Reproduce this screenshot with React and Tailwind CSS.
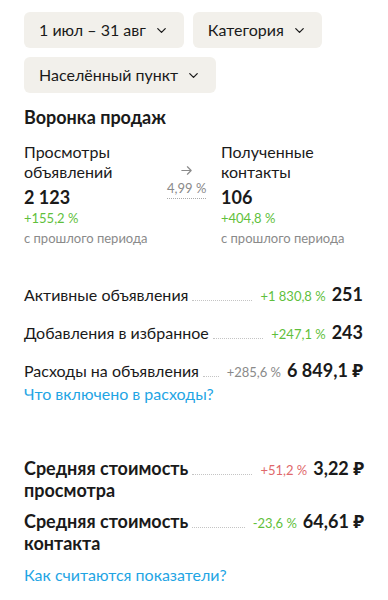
import { ChevronDown } from 'lucide-react';

function Chip({ label }) {
  return (
    <button
      type="button"
      className="flex h-9 items-center gap-2 rounded-md bg-[#f2f0eb] px-[15px] text-[16px] text-[#1a1a1a]"
    >
      <span>{label}</span>
      <ChevronDown size={15} strokeWidth={2} />
    </button>
  );
}

function Leader() {
  return <span className="mx-1 h-[1px] min-w-[12px] flex-1 self-baseline border-b border-dotted border-[#c4c4c4]" />;
}

function Row({ label, pct, pctColor, value }) {
  return (
    <div className="flex items-baseline leading-6">
      <span className="text-[16px] text-[#1a1a1a]">{label}</span>
      <Leader />
      <span className={`ml-1 text-[13px] ${pctColor}`}>{pct}</span>
      <span className="ml-[6px] text-[18px] font-bold text-[#1a1a1a]">{value}</span>
    </div>
  );
}

function CostRow({ first, second, pct, pctColor, value }) {
  return (
    <div className="flex items-baseline leading-[22px]">
      <div className="flex flex-1 flex-col">
        <div className="flex items-baseline">
          <span className="text-[18px] font-bold">{first}</span>
          <Leader />
        </div>
        <span className="text-[18px] font-bold">{second}</span>
      </div>
      <span className={`ml-1 text-[13px] ${pctColor}`}>{pct}</span>
      <span className="ml-[6px] text-[18px] font-bold">{value}</span>
    </div>
  );
}

function FunnelCol({ title, second, value, pct }) {
  return (
    <div className="flex flex-col">
      <span className="text-[16px] leading-5">{title}</span>
      <span className="text-[16px] leading-5">{second}</span>
      <span className="mt-[5px] text-[18px] font-bold leading-5">{value}</span>
      <span className="mt-[1px] text-[13px] leading-5 text-[#5fbf3c]">{pct}</span>
      <span className="whitespace-nowrap text-[13px] leading-5 text-[#8a8a8a]">с прошлого периода</span>
    </div>
  );
}

export default function App() {
  return (
    <div className="min-h-[600px] bg-white px-6 pt-3 text-[#1a1a1a]" style={{ fontFamily: 'Lato, "Noto Sans", sans-serif' }}>
      <div className="flex flex-wrap gap-[9px]">
        <Chip label="1 июл – 31 авг" />
        <Chip label="Категория" />
        <Chip label="Населённый пункт" />
      </div>

      <h2 className="mt-[12px] text-[18px] font-bold leading-6">Воронка продаж</h2>

      <div className="mt-[13px] flex">
        <div className="w-[143px] shrink-0">
          <FunnelCol title="Просмотры" second="объявлений" value="2 123" pct="+155,2 %" />
        </div>
        <div className="w-[54px] shrink-0 pt-[17px]">
          <div className="inline-flex flex-col items-center">
            <svg width="13" height="13" viewBox="0 0 14 14" fill="none" stroke="#8a8a8a" strokeWidth="1.3" strokeLinecap="round" strokeLinejoin="round">
              <path d="M2 7h10M8 3l4 4-4 4" />
            </svg>
            <span className="mt-[1px] border-b border-dotted border-[#aaa] text-[13px] leading-5 text-[#8a8a8a]">4,99 %</span>
          </div>
        </div>
        <div className="flex-1">
          <FunnelCol title="Полученные" second="контакты" value="106" pct="+404,8 %" />
        </div>
      </div>

      <div className="mt-[34px] flex flex-col gap-[12px] pr-[1px]">
        <Row label="Активные объявления" pct="+1 830,8 %" pctColor="text-[#5fbf3c]" value="251" />
        <Row label="Добавления в избранное" pct="+247,1 %" pctColor="text-[#5fbf3c]" value="243" />
        <div>
          <Row label="Расходы на объявления" pct="+285,6 %" pctColor="text-[#8a8a8a]" value="6 849,1 ₽" />
          <a className="block text-[16px] leading-5 text-[#1fa5e4]">Что включено в расходы?</a>
        </div>
      </div>

      <div className="mt-[53px] flex flex-col gap-[9px]">
        <CostRow first="Средняя стоимость" second="просмотра" pct="+51,2 %" pctColor="text-[#e0686b]" value="3,22 ₽" />
        <CostRow first="Средняя стоимость" second="контакта" pct="-23,6 %" pctColor="text-[#5fbf3c]" value="64,61 ₽" />
      </div>

      <a className="mt-[11px] block text-[16px] leading-5 text-[#1fa5e4]">Как считаются показатели?</a>
    </div>
  );
}
